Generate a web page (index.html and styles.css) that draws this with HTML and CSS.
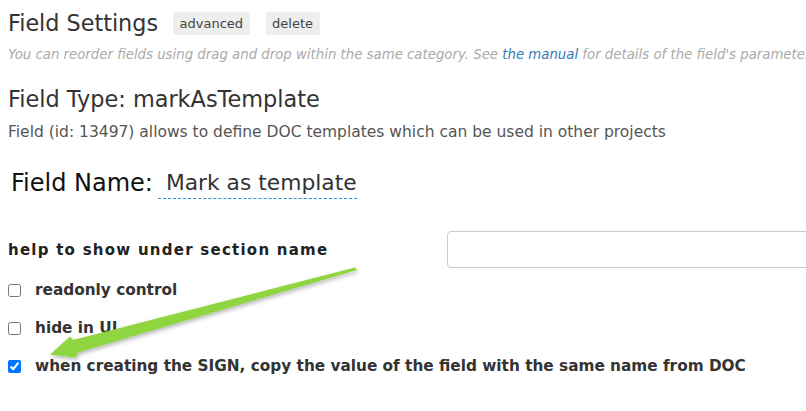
FILE: index.html
```html
<!DOCTYPE html>
<html>
<head>
<meta charset="utf-8">
<link rel="stylesheet" href="styles.css">
</head>
<body>
<div class="page">
  <div class="title-row">
    <h1 class="title">Field Settings</h1>
    <span class="btn">advanced</span>
    <span class="btn">delete</span>
  </div>
  <p class="hint">You can reorder fields using drag and drop within the same category. See <a class="link">the manual</a> for details of the field's parameters.</p>
  <h2 class="type">Field Type: markAsTemplate</h2>
  <p class="desc">Field (id: 13497) allows to define DOC templates which can be used in other projects</p>
  <div class="name-row">
    <span class="name-label">Field Name:</span>
    <span class="name-value">Mark as template</span>
  </div>
  <div class="help-row">
    <label class="help-label">help to show under section name</label>
    <input class="help-input" type="text">
  </div>
  <div class="check-row first"><input class="check" type="checkbox"><span class="check-label">readonly control</span></div>
  <div class="check-row"><input class="check" type="checkbox"><span class="check-label">hide in UI</span></div>
  <div class="check-row"><input class="check" type="checkbox" checked><span class="check-label">when creating the SIGN, copy the value of the field with the same name from DOC</span></div>
</div>
<svg class="arrow" width="806" height="411" viewBox="0 0 806 411">
  <defs>
    <filter id="sh" x="-10%" y="-30%" width="120%" height="160%">
      <feDropShadow dx="1" dy="2" stdDeviation="2" flood-color="#000" flood-opacity="0.3"/>
    </filter>
  </defs>
  <polygon filter="url(#sh)" fill="#8fd53f" points="355,267.5 357,270 78,352.5 76,357.5 50,354.5 70,336.5 73,340"/>
</svg>
</body>
</html>
```
FILE: styles.css
```css
html, body {
  margin: 0;
  padding: 0;
  background: #fff;
  overflow: hidden;
  width: 806px;
  height: 411px;
}
body {
  font-family: "DejaVu Sans", Verdana, sans-serif;
  color: #333;
  position: relative;
}
.page {
  padding: 12px 0 0 8px;
  display: flex;
  flex-direction: column;
  white-space: nowrap;
}
.title-row {
  display: flex;
  align-items: center;
  height: 23px;
}
.title {
  margin: 0 15px 0 0;
  font-size: 22.3px;
  font-weight: normal;
  line-height: 23px;
  color: #333;
}
.btn {
  display: inline-flex;
  align-items: center;
  height: 23px;
  padding: 0 6.5px;
  margin-right: 16px;
  background: #eee;
  border-radius: 3px;
  font-size: 13px;
  color: #444;
}
.hint {
  margin: 12px 0 0;
  font-size: 13.3px;
  line-height: 16px;
  font-style: italic;
  color: #aaa;
}
.link {
  color: #337ab7;
}
.type {
  margin: 24px 0 0;
  font-size: 22.4px;
  line-height: 24px;
  font-weight: normal;
  color: #333;
}
.desc {
  margin: 12px 0 0;
  font-size: 15.5px;
  line-height: 18px;
  color: #555;
}
.name-row {
  margin: 30px 0 0 3px;
  display: flex;
  align-items: flex-start;
  line-height: 24px;
}
.name-label {
  font-size: 24px;
  color: #111;
  margin-right: 5px;
}
.name-value {
  font-size: 21.8px;
  padding: 0 0 3px 8px;
  border-bottom: 1px dashed #2a8fd6;
  color: #333;
}
.help-row {
  margin-top: 32px;
  display: flex;
  align-items: center;
  height: 37px;
}
.help-label {
  width: 439px;
  flex: none;
  font-size: 15px;
  font-weight: bold;
  letter-spacing: 1.25px;
  color: #222;
}
.help-input {
  flex: none;
  width: 420px;
  height: 37px;
  box-sizing: border-box;
  margin: 0;
  border: 1px solid #ccc;
  border-radius: 4px;
}
.check-row {
  display: flex;
  align-items: center;
  height: 38px;
}
.check-row.first {
  margin-top: 3px;
}
.check {
  margin: 0 14px 0 0;
  width: 13px;
  height: 13px;
}
.check-label {
  font-size: 15.3px;
  font-weight: bold;
  color: #333;
}
.arrow {
  position: absolute;
  left: 0;
  top: 0;
  pointer-events: none;
}
```
